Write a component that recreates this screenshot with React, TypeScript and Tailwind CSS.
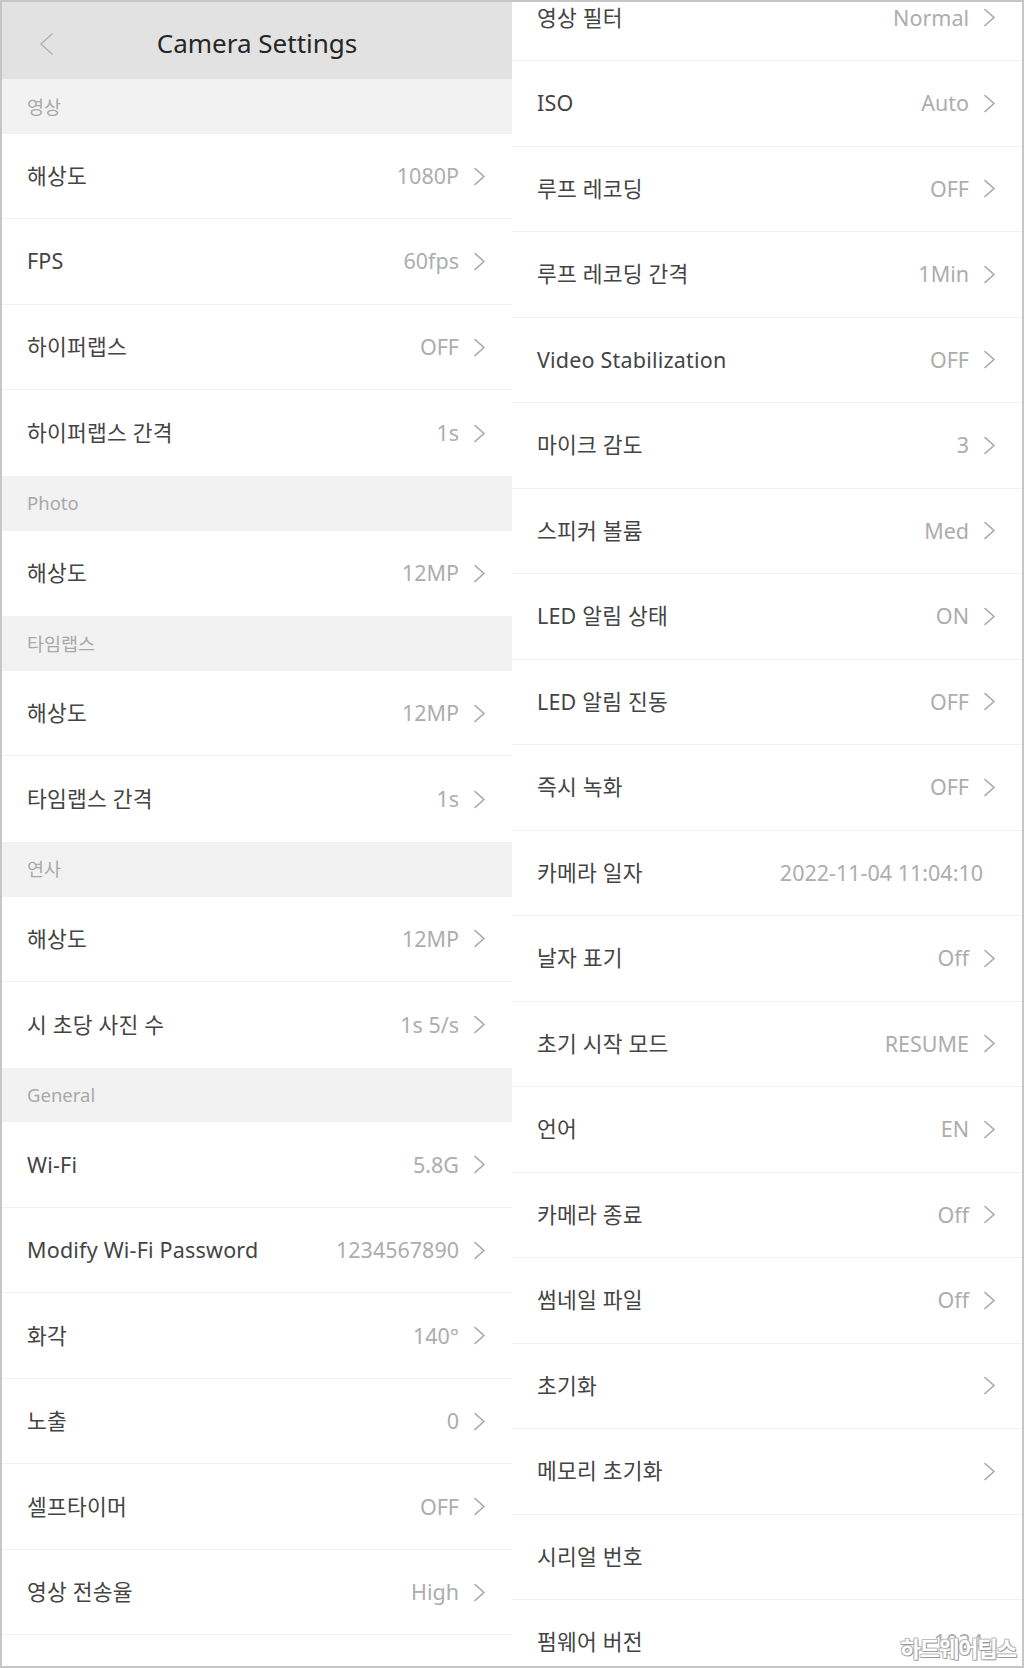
import React from "react";

type Row = { label: string; value?: string; chevron?: boolean };
type Group = { title: string; rows: Row[] };

const LEFT: Group[] = [
  {
    title: "영상",
    rows: [
      { label: "해상도", value: "1080P", chevron: true },
      { label: "FPS", value: "60fps", chevron: true },
      { label: "하이퍼랩스", value: "OFF", chevron: true },
      { label: "하이퍼랩스 간격", value: "1s", chevron: true },
    ],
  },
  { title: "Photo", rows: [{ label: "해상도", value: "12MP", chevron: true }] },
  {
    title: "타임랩스",
    rows: [
      { label: "해상도", value: "12MP", chevron: true },
      { label: "타임랩스 간격", value: "1s", chevron: true },
    ],
  },
  {
    title: "연사",
    rows: [
      { label: "해상도", value: "12MP", chevron: true },
      { label: "시 초당 사진 수", value: "1s 5/s", chevron: true },
    ],
  },
  {
    title: "General",
    rows: [
      { label: "Wi-Fi", value: "5.8G", chevron: true },
      { label: "Modify Wi-Fi Password", value: "1234567890", chevron: true },
      { label: "화각", value: "140°", chevron: true },
      { label: "노출", value: "0", chevron: true },
      { label: "셀프타이머", value: "OFF", chevron: true },
      { label: "영상 전송율", value: "High", chevron: true },
    ],
  },
];

const RIGHT: Row[] = [
  { label: "영상 필터", value: "Normal", chevron: true },
  { label: "ISO", value: "Auto", chevron: true },
  { label: "루프 레코딩", value: "OFF", chevron: true },
  { label: "루프 레코딩 간격", value: "1Min", chevron: true },
  { label: "Video Stabilization", value: "OFF", chevron: true },
  { label: "마이크 감도", value: "3", chevron: true },
  { label: "스피커 볼륨", value: "Med", chevron: true },
  { label: "LED 알림 상태", value: "ON", chevron: true },
  { label: "LED 알림 진동", value: "OFF", chevron: true },
  { label: "즉시 녹화", value: "OFF", chevron: true },
  { label: "카메라 일자", value: "2022-11-04 11:04:10" },
  { label: "날자 표기", value: "Off", chevron: true },
  { label: "초기 시작 모드", value: "RESUME", chevron: true },
  { label: "언어", value: "EN", chevron: true },
  { label: "카메라 종료", value: "Off", chevron: true },
  { label: "썸네일 파일", value: "Off", chevron: true },
  { label: "초기화", chevron: true },
  { label: "메모리 초기화", chevron: true },
  { label: "시리얼 번호" },
  { label: "펌웨어 버전", value: "1024" },
];

function Chevron() {
  return (
    <svg width="13" height="19" viewBox="0 0 13 19" fill="none" className="shrink-0">
      <path d="M2 1.5l9 8-9 8" stroke="#a6a6a6" strokeWidth="1.6" strokeLinecap="round" strokeLinejoin="round" />
    </svg>
  );
}

function SettingRow({ row, last }: { row: Row; last?: boolean }) {
  return (
    <div
      className={`flex items-center justify-between h-[85.5px] shrink-0 pl-[25px] pr-[26px] bg-white ${
        last ? "" : "border-b border-[#f1f1f1]"
      }`}
    >
      <span className="text-[21.5px] text-[#444444] tracking-[0.2px]">{row.label}</span>
      <div className={`flex items-center gap-[14px] ${row.chevron ? "" : "pr-[13px]"}`}>
        {row.value && <span className="text-[21.5px] text-[#adadad]">{row.value}</span>}
        {row.chevron && <Chevron />}
      </div>
    </div>
  );
}

export default function App() {
  return (
    <div className="w-[1024px] h-[1668px] overflow-hidden border-2 border-[#c6c6c6] bg-white font-['Noto_Sans','Noto_Sans_CJK_KR',sans-serif] flex relative">
      {/* left column */}
      <div className="w-[510px] flex flex-col">
        <div className="h-[77px] bg-[#e2e2e2] flex items-center justify-center relative">
          <svg width="16" height="24" viewBox="0 0 16 24" fill="none" className="absolute left-[36px] top-[30px]">
            <path d="M14 2L3 12l11 10" stroke="#b3b3b3" strokeWidth="1.6" strokeLinecap="round" strokeLinejoin="round" />
          </svg>
          <span className="text-[26px] text-[#262626] mt-[6px]">Camera Settings</span>
        </div>
        {LEFT.map((g) => (
          <div key={g.title} className="flex flex-col">
            <div className="h-[54.8px] bg-[#f2f2f2] flex items-center pl-[25px]">
              <span className="text-[18.5px] text-[#a9a9a9]">{g.title}</span>
            </div>
            {g.rows.map((r, i) => (
              <SettingRow key={r.label + i} row={r} last={i === g.rows.length - 1 && g.title !== "General"} />
            ))}
          </div>
        ))}
      </div>

      {/* right column */}
      <div className="w-[510px] flex flex-col -mt-[26.5px]">
        {RIGHT.map((r) => (
          <SettingRow key={r.label} row={r} />
        ))}
      </div>

      {/* watermark */}
      <span className="absolute right-[6px] bottom-[1px] text-[22px] font-bold text-white tracking-[-1px] [text-shadow:1px_1px_0_#9a9a9a,-1px_-1px_0_#bdbdbd,1px_-1px_0_#bdbdbd,-1px_1px_0_#bdbdbd]">
        하드웨어팁스
      </span>
    </div>
  );
}
